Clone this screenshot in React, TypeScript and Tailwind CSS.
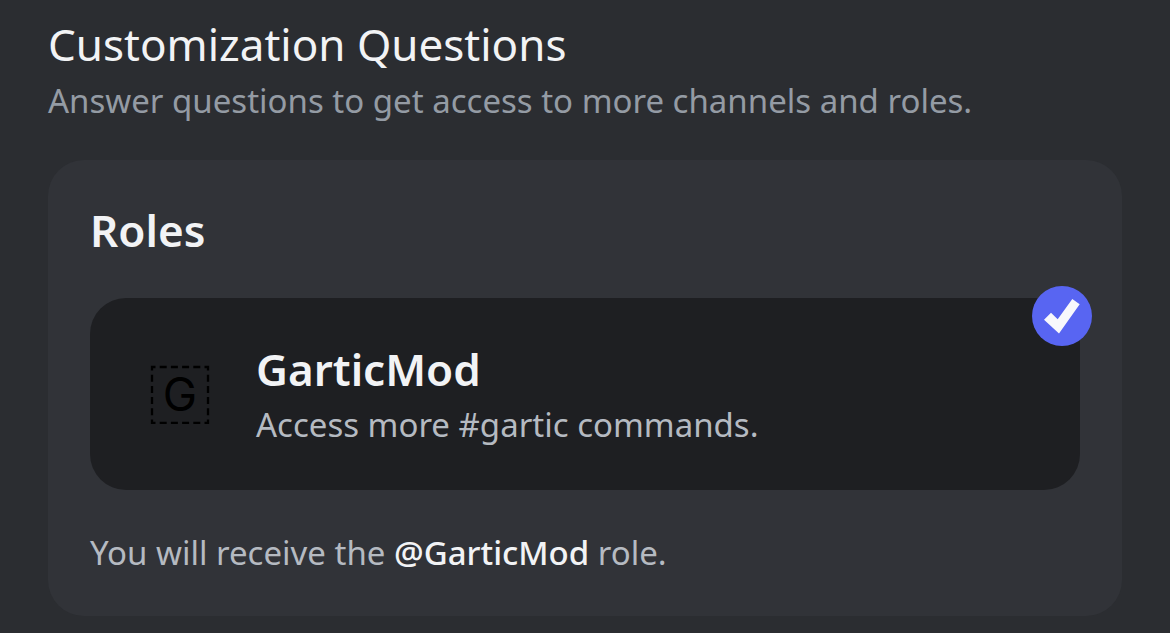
import React from 'react';

const RoleIcon = () => (
  <span className="relative flex size-[60px] shrink-0 items-center justify-center">
    <svg viewBox="0 0 60 60" className="absolute inset-0 size-full" aria-hidden="true">
      <path
        d="M2 3H58V59H2Z"
        fill="none"
        stroke="#000"
        strokeWidth="2.3"
        strokeDasharray="7 4.2"
        strokeDashoffset="3.5"
      />
    </svg>
    <span className="font-['Inter',sans-serif] text-[46px] leading-[60px] text-black">G</span>
  </span>
);

const CheckBadge = () => (
  <svg viewBox="0 0 60 60" className="absolute -top-3 -right-3 size-[60px]" aria-hidden="true">
    <circle cx="30" cy="30" r="30" fill="#5865f2" />
    <path d="M12 33.7L19 26.7L25.7 33.3L40.3 13L47.7 18.3L27 47.6Z" fill="#f8f8fc" />
  </svg>
);

const RoleOption = ({title, description}: {title: string; description: string}) => {
  return (
    <label className="relative flex cursor-pointer items-center gap-[46px] rounded-[36px] bg-[#1e1f22] px-[60px] py-[42px]">
      <input type="checkbox" defaultChecked className="peer sr-only" />
      <RoleIcon />
      <span className="flex flex-col gap-1">
        <span className="text-[44px] leading-[58px] font-semibold text-[#f2f3f5]">{title}</span>
        <span className="text-[33px] leading-[46px] text-[#b5bac1]">{description}</span>
      </span>
      <CheckBadge />
    </label>
  );
};

const App = () => {
  return (
    <main className="min-h-screen bg-[#2b2d31] px-12 pt-[14px] pb-4 font-['Noto_Sans',sans-serif]">
      <h1 className="text-[44px] leading-[60px] text-[#f2f3f5]">Customization Questions</h1>
      <p className="mt-1 text-[33px] leading-[46px] text-[#949ba4]">
        Answer questions to get access to more channels and roles.
      </p>
      <section className="mt-9 rounded-[36px] bg-[#313338] px-[42px] py-10">
        <h2 className="mb-[38px] text-[44px] leading-[60px] font-semibold text-[#f2f3f5]">Roles</h2>
        <RoleOption title="GarticMod" description="Access more #gartic commands." />
        <p className="mt-10 text-[33px] leading-[46px] text-[#b5bac1]">
          You will receive the <span className="font-medium text-[#f2f3f5]">@GarticMod</span> role.
        </p>
      </section>
    </main>
  );
};

export default App;
